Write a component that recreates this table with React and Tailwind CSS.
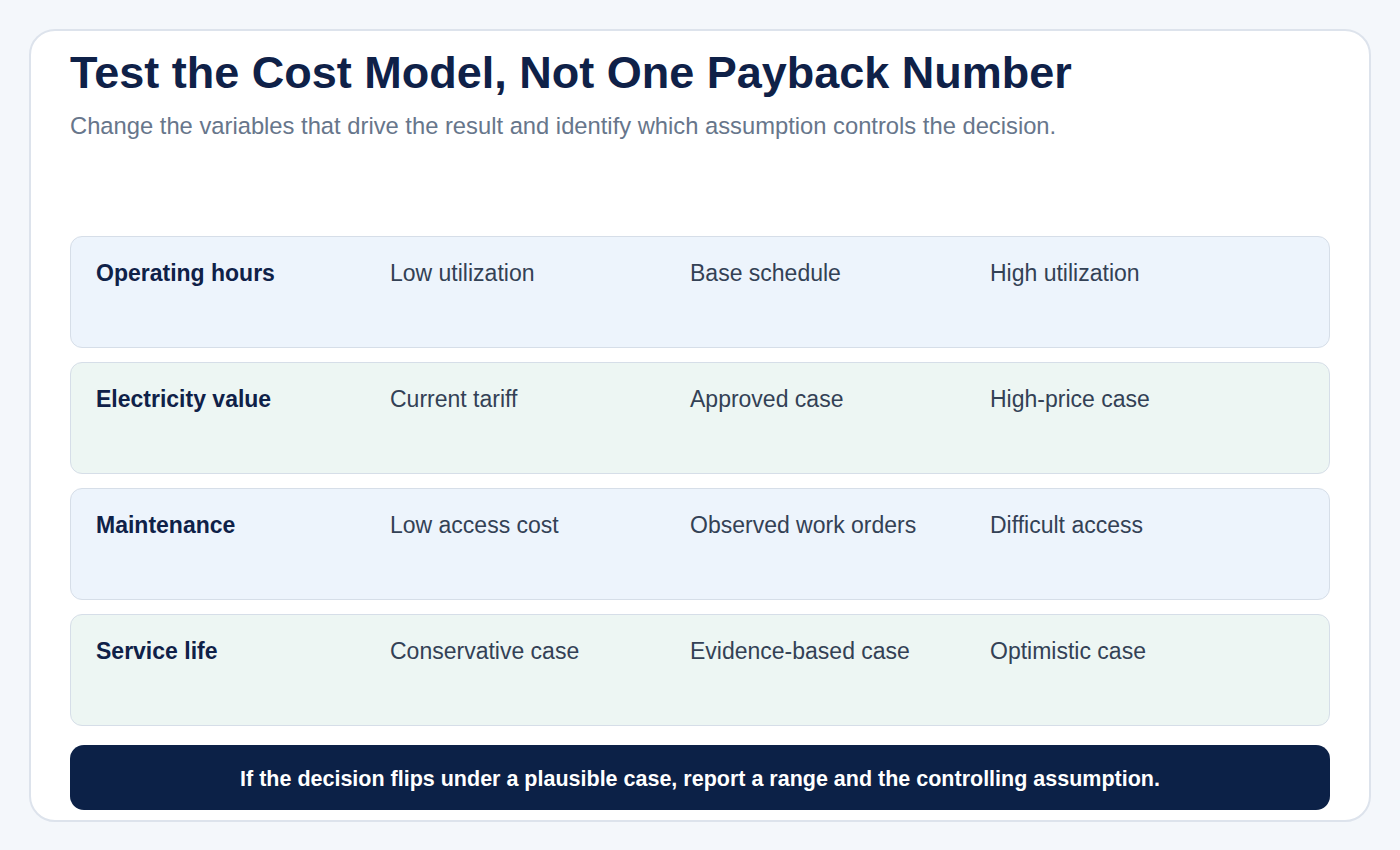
import React from 'react';

const rows = [
  { label: 'Operating hours', cases: ['Low utilization', 'Base schedule', 'High utilization'], tone: 'blue' },
  { label: 'Electricity value', cases: ['Current tariff', 'Approved case', 'High-price case'], tone: 'green' },
  { label: 'Maintenance', cases: ['Low access cost', 'Observed work orders', 'Difficult access'], tone: 'blue' },
  { label: 'Service life', cases: ['Conservative case', 'Evidence-based case', 'Optimistic case'], tone: 'green' },
];

const App = () => {
  return (
    <div className="min-h-[850px] bg-[#f4f7fb] p-[29px] font-['Liberation_Sans',Arial,sans-serif]">
      <div className="h-[793px] flex flex-col bg-white border-2 border-[#dde3ec] rounded-[26px] px-[39px] pt-[15px]">
        <h1 className="text-[45px] leading-[54px] font-bold text-[#0f2148]">
          Test the Cost Model, Not One Payback Number
        </h1>
        <p className="mt-[12px] text-[23.75px] leading-[28px] text-[#67768b]">
          Change the variables that drive the result and identify which assumption controls the decision.
        </p>
        <div className="mt-[96px] flex flex-col gap-[14px]">
          {rows.map((row) => (
            <div
              key={row.label}
              className={
                'h-[112px] rounded-[12px] border border-[#d6dee8] px-[25px] pt-[21px] grid grid-cols-[294px_300px_300px_1fr] text-[23px] leading-[30px] ' +
                (row.tone === 'blue' ? 'bg-[#edf4fc]' : 'bg-[#edf6f3]')
              }
            >
              <div className="font-bold text-[#0f2148]">{row.label}</div>
              {row.cases.map((c) => (
                <div key={c} className="text-[#334155]">{c}</div>
              ))}
            </div>
          ))}
        </div>
        <div className="mt-[19px] h-[65px] rounded-[14px] bg-[#0c2147] flex items-center justify-center pt-[3px]">
          <p className="text-white font-bold text-[21.5px]">
            If the decision flips under a plausible case, report a range and the controlling assumption.
          </p>
        </div>
      </div>
    </div>
  );
};

export default App;
